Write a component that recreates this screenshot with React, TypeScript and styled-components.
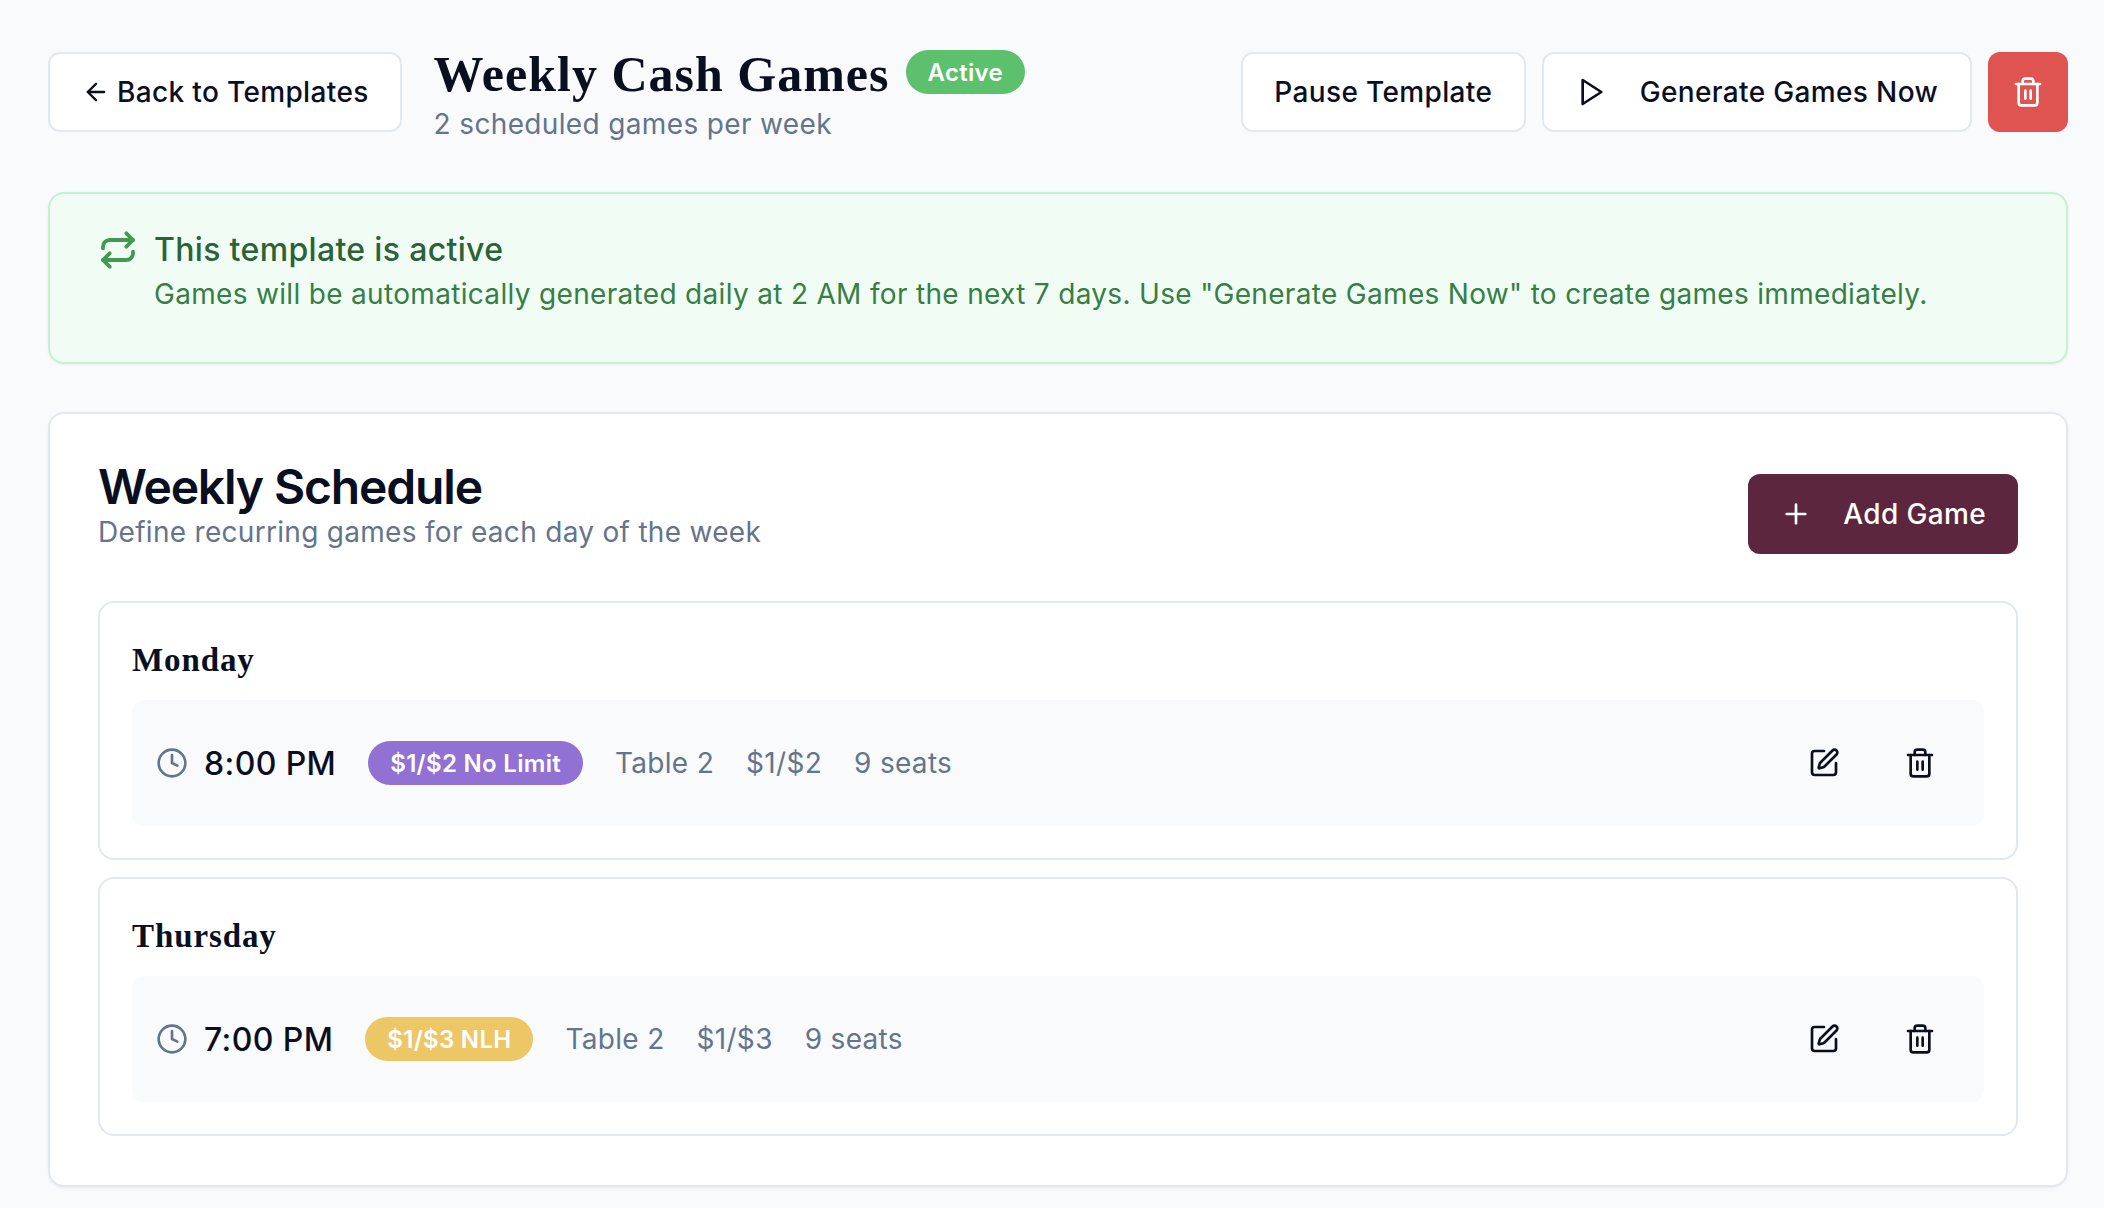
import React from "react";
import styled, { createGlobalStyle } from "styled-components";
import { ArrowLeft, Clock, Plus, Repeat, SquarePen, Trash2 } from "lucide-react";

const Global = createGlobalStyle`
  * { box-sizing: border-box; }
  html, body { margin: 0; padding: 0; background: #f8fafc; }
  body { font-family: Inter, "Liberation Sans", sans-serif; color: #0a0f1f; }
`;

const Page = styled.div`
  min-height: 1208px;
  padding: 52px 36px 0 48px;
  display: flex;
  flex-direction: column;
`;

const Header = styled.header`
  display: flex;
  align-items: flex-start;
  gap: 32px;
  height: 92px;
`;

const Button = styled.button<{ $variant?: "outline" | "danger" | "primary"; $gap?: number }>`
  height: 80px;
  display: inline-flex;
  align-items: center;
  justify-content: center;
  gap: ${(p) => p.$gap ?? 0}px;
  padding: 0 32px;
  border-radius: 12px;
  font: 500 28px Inter, sans-serif;
  letter-spacing: 0.35px;
  white-space: nowrap;
  border: ${(p) => (p.$variant === "outline" ? "2px solid #e2e8f0" : "none")};
  background: ${(p) =>
    p.$variant === "danger" ? "#df5450" : p.$variant === "primary" ? "#5c273e" : "#fff"};
  color: ${(p) => (p.$variant === "outline" ? "#0a0f1f" : "#fff")};
`;

const BackButton = styled(Button)`
  padding: 0 31px 0 32px;
`;

const PauseButton = styled(Button)`
  padding: 0 31.5px;
`;

const TitleBlock = styled.div`
  display: flex;
  flex-direction: column;
  flex: 1;
`;

const TitleRow = styled.div`
  display: flex;
  align-items: flex-start;
  gap: 16px;
  height: 54px;
`;

const Title = styled.h1`
  margin: 0;
  font: 700 50px/44px "Liberation Serif", serif;
  letter-spacing: 1px;
  white-space: nowrap;
  color: #0a0f1f;
`;

const Pill = styled.span<{ $color: string }>`
  display: inline-flex;
  align-items: center;
  height: 44px;
  padding: 0 22px;
  border-radius: 22px;
  background: ${(p) => p.$color};
  color: #fff;
  font: 600 24px Inter, sans-serif;
  letter-spacing: 0.3px;
  white-space: nowrap;
`;

const ActivePill = styled(Pill)`
  margin-top: -2px;
`;

const Subtitle = styled.p`
  margin: 0;
  font: 400 28px/36px Inter, sans-serif;
  letter-spacing: 0.35px;
  color: #64748b;
`;

const Actions = styled.div`
  display: flex;
  gap: 16px;
`;

const IconButton = styled(Button)`
  width: 80px;
  padding: 0;
`;

const Banner = styled.section`
  margin-top: 48px;
  height: 172px;
  padding: 36px 48px;
  display: flex;
  gap: 16px;
  background: #f1fcf4;
  border: 2px solid #c5f2d2;
  border-radius: 16px;
  box-shadow: 0 1px 3px rgba(0, 0, 0, 0.06);
`;

const BannerText = styled.div`
  display: flex;
  flex-direction: column;
`;

const BannerTitle = styled.div`
  font: 500 32px/40px Inter, sans-serif;
  letter-spacing: 0.33px;
  color: #2b6238;
`;

const BannerBody = styled.div`
  margin-top: 4px;
  font: 400 28px/40px Inter, sans-serif;
  letter-spacing: 0.32px;
  color: #357f45;
  white-space: nowrap;
`;

const Card = styled.section`
  margin-top: 48px;
  height: 775px;
  padding: 48px;
  background: #fff;
  border: 2px solid #e2e8f0;
  border-radius: 16px;
  box-shadow: 0 1px 3px rgba(0, 0, 0, 0.06);
`;

const CardHeader = styled.div`
  display: flex;
  justify-content: space-between;
  align-items: flex-start;
  height: 139px;
`;

const CardTitle = styled.h2`
  margin: -1px 0 1px;
  font: 600 48px/52px Inter, sans-serif;
  letter-spacing: -1.15px;
  color: #0a0f1f;
`;

const CardSubtitle = styled.p`
  margin: 0;
  font: 400 28px/36px Inter, sans-serif;
  letter-spacing: 0.3px;
  color: #64748b;
`;

const AddButton = styled(Button)`
  margin-top: 12px;
`;

const DayList = styled.div`
  display: flex;
  flex-direction: column;
  gap: 17px;
`;

const DayCard = styled.article`
  height: 259px;
  padding: 35px 32px 0;
  border: 2px solid #e2e8f0;
  border-radius: 16px;
  background: #fff;
`;

const DayName = styled.h3`
  margin: 0 0 18px;
  font: 700 33px/44px "Liberation Serif", serif;
  letter-spacing: 0.9px;
  color: #0a0f1f;
`;

const GameRow = styled.div`
  height: 126px;
  padding: 0 16px 0 24px;
  display: flex;
  align-items: center;
  gap: 32px;
  background: #f8fafc;
  border-radius: 12px;
`;

const Time = styled.div`
  display: flex;
  align-items: center;
  gap: 16px;
  font: 500 32px Inter, sans-serif;
  letter-spacing: 0.4px;
  color: #0a0f1f;
  svg { color: #64748b; }
`;

const Meta = styled.span`
  font: 400 28px Inter, sans-serif;
  letter-spacing: 0.3px;
  color: #64748b;
`;

const RowActions = styled.div`
  margin-left: auto;
  display: flex;
  gap: 64px;
  padding-right: 32px;
  color: #0a0f1f;
  svg { display: block; }
`;

const PlayIcon = () => (
  <svg
    width="32"
    height="32"
    viewBox="0 0 24 24"
    fill="none"
    stroke="currentColor"
    strokeWidth="2"
    strokeLinecap="round"
    strokeLinejoin="round"
  >
    <polygon points="5 3 19 12 5 21 5 3" />
  </svg>
);

const days = [
  { day: "Monday", time: "8:00 PM", game: "$1/$2 No Limit", color: "#9171d3", stakes: "$1/$2" },
  { day: "Thursday", time: "7:00 PM", game: "$1/$3 NLH", color: "#edc766", stakes: "$1/$3" },
];

export default function App() {
  return (
    <Page>
      <Global />
      <Header>
        <BackButton $variant="outline" $gap={7}>
          <ArrowLeft size={28} strokeWidth={2} />
          Back to Templates
        </BackButton>
        <TitleBlock>
          <TitleRow>
            <Title>Weekly Cash Games</Title>
            <ActivePill $color="#5cc06c">Active</ActivePill>
          </TitleRow>
          <Subtitle>2 scheduled games per week</Subtitle>
        </TitleBlock>
        <Actions>
          <PauseButton $variant="outline">Pause Template</PauseButton>
          <Button $variant="outline" $gap={32}>
            <PlayIcon />
            Generate Games Now
          </Button>
          <IconButton $variant="danger">
            <Trash2 size={32} strokeWidth={2} />
          </IconButton>
        </Actions>
      </Header>

      <Banner>
        <Repeat size={40} strokeWidth={2.3} color="#3f9b52" />
        <BannerText>
          <BannerTitle>This template is active</BannerTitle>
          <BannerBody>
            Games will be automatically generated daily at 2 AM for the next 7 days. Use "Generate Games Now" to create games immediately.
          </BannerBody>
        </BannerText>
      </Banner>

      <Card>
        <CardHeader>
          <div>
            <CardTitle>Weekly Schedule</CardTitle>
            <CardSubtitle>Define recurring games for each day of the week</CardSubtitle>
          </div>
          <AddButton $variant="primary" $gap={31}>
            <Plus size={32} strokeWidth={2} />
            Add Game
          </AddButton>
        </CardHeader>
        <DayList>
          {days.map((d) => (
            <DayCard key={d.day}>
              <DayName>{d.day}</DayName>
              <GameRow>
                <Time>
                  <Clock size={32} strokeWidth={2} />
                  {d.time}
                </Time>
                <Pill $color={d.color}>{d.game}</Pill>
                <Meta>Table 2</Meta>
                <Meta>{d.stakes}</Meta>
                <Meta>9 seats</Meta>
                <RowActions>
                  <SquarePen size={32} strokeWidth={2} />
                  <Trash2 size={32} strokeWidth={2} />
                </RowActions>
              </GameRow>
            </DayCard>
          ))}
        </DayList>
      </Card>
    </Page>
  );
}
